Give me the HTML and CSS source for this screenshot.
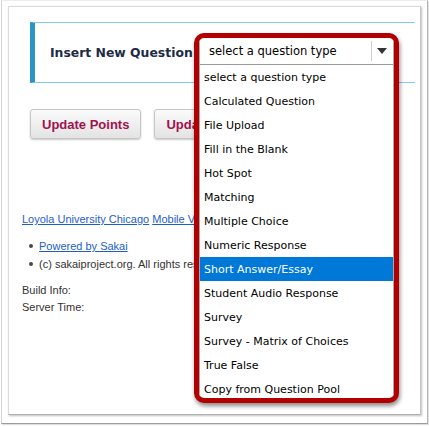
FILE: index.html
```html
<!DOCTYPE html>
<html>
<head>
<meta charset="utf-8">
<link rel="stylesheet" href="styles.css">
</head>
<body>
<div class="frame">
  <div class="panel">
    <div class="qhead"><span class="qtitle">Insert New Question</span></div>
    <div class="actions">
      <button class="btn">Update Points</button>
      <button class="btn btn-gap">Update Question Order</button>
    </div>
    <div class="footer">
      <div class="links"><a href="#">Loyola University Chicago</a> <a href="#">Mobile View</a></div>
      <ul class="credits">
        <li><a href="#">Powered by Sakai</a></li>
        <li>(c) sakaiproject.org. All rights reserved.</li>
      </ul>
      <div class="info first">Build Info:</div>
      <div class="info">Server Time:</div>
    </div>
    <div class="dropdown">
      <div class="dd-inner">
        <div class="select">
          <span class="select-text">select a question type</span>
          <span class="caret"><span class="tri"></span></span>
        </div>
        <ul class="options">
          <li>select a question type</li>
          <li>Calculated Question</li>
          <li>File Upload</li>
          <li>Fill in the Blank</li>
          <li>Hot Spot</li>
          <li>Matching</li>
          <li>Multiple Choice</li>
          <li>Numeric Response</li>
          <li class="active">Short Answer/Essay</li>
          <li>Student Audio Response</li>
          <li>Survey</li>
          <li>Survey - Matrix of Choices</li>
          <li>True False</li>
          <li>Copy from Question Pool</li>
        </ul>
      </div>
    </div>
  </div>
</div>
</body>
</html>
```

FILE: styles.css
```css
* { box-sizing: border-box; }
html, body { margin: 0; padding: 0; background: #fff; }
body { width: 429px; height: 426px; overflow: hidden; }

.frame {
  margin-left: 1px;
  width: 427px;
  height: 424px;
  border: 1px solid #d4d4d4;
  border-top-color: #ececec;
  border-right-color: #b4b4b4;
  border-bottom-color: #9c9c9c;
  box-shadow: 1px 1px 1px rgba(0,0,0,0.12);
  padding: 5px 6px 0 6px;
}

.panel {
  position: relative;
  width: 413px;
  height: 409px;
  border: 1px solid #dadada;
  border-right-color: #c4c4c4;
  border-bottom-color: #b0b0b0;
  box-shadow: 1px 1px 2px rgba(0,0,0,0.25);
  padding: 15px 4px 0 13px;
}

.qhead {
  margin-left: 8px;
  width: 385px;
  height: 61px;
  border-left: 5px solid #2b95c6;
  border-top: 1px solid #86c9ea;
  border-bottom: 1px solid #86c9ea;
  display: flex;
  align-items: center;
  padding-left: 15px;
}
.qtitle {
  font-family: "DejaVu Sans", sans-serif;
  font-weight: bold;
  font-size: 12.4px;
  color: #1d2b45;
  white-space: nowrap;
}

.actions {
  margin: 26px 0 0 8px;
  display: flex;
}
.btn {
  flex: none;
  height: 30px;
  padding: 0 11px;
  font-family: "Liberation Sans", Arial, sans-serif;
  font-weight: bold;
  font-size: 13px;
  color: #a0124f;
  background: linear-gradient(#fbfbfb, #e3e3e3);
  border: 1px solid #c6c6c6;
  border-radius: 3px;
  box-shadow: 0 1px 2px rgba(0,0,0,0.22);
  white-space: nowrap;
}
.btn-gap { margin-left: 13px; }

.footer {
  margin-top: 72px;
  font-family: "Liberation Sans", Arial, sans-serif;
  font-size: 11px;
  color: #333;
  white-space: nowrap;
}
.footer a { color: #1d5ec9; text-decoration: underline; }
.links { line-height: 17px; }
.credits {
  margin: 9px 0 0 0;
  padding-left: 7px;
  list-style: none;
}
.credits li {
  line-height: 18px;
  display: flex;
  align-items: center;
}
.credits li::before {
  content: "";
  flex: none;
  width: 4px;
  height: 4px;
  border-radius: 50%;
  background: #4a4a4a;
  margin-right: 6px;
}
.info { line-height: 17px; }
.info.first { margin-top: 9px; }

.dropdown {
  position: absolute;
  left: 185px;
  top: 26px;
  width: 205px;
  height: 370px;
  border: 5px solid #b20000;
  border-radius: 10px;
  background: #fff;
  overflow: hidden;
  box-shadow: 1px 3px 4px rgba(0,0,0,0.45);
}
.dd-inner {
  border-left: 1px solid #a8a8a8;
  border-right: 1px solid #a8a8a8;
  height: 100%;
}
.select {
  display: flex;
  align-items: center;
  height: 27px;
  border-bottom: 1px solid #9a9a9a;
  padding-left: 9px;
  font-family: "DejaVu Sans", sans-serif;
  font-size: 11.5px;
  color: #000;
}
.select-text { flex: 1; white-space: nowrap; }
.caret {
  width: 22px;
  height: 20px;
  border-left: 1px solid #cfcfcf;
  display: flex;
  align-items: center;
  justify-content: center;
  padding-right: 2px;
}
.tri {
  width: 0;
  height: 0;
  border-left: 5px solid transparent;
  border-right: 5px solid transparent;
  border-top: 6px solid #333;
}
.options {
  list-style: none;
  margin: 0;
  padding: 0;
  font-family: "DejaVu Sans", sans-serif;
  font-size: 11px;
  color: #000;
}
.options li {
  height: 24px;
  line-height: 25px;
  padding-left: 4px;
  white-space: nowrap;
}
.options li.active {
  background: #0078d7;
  color: #fff;
}
```
